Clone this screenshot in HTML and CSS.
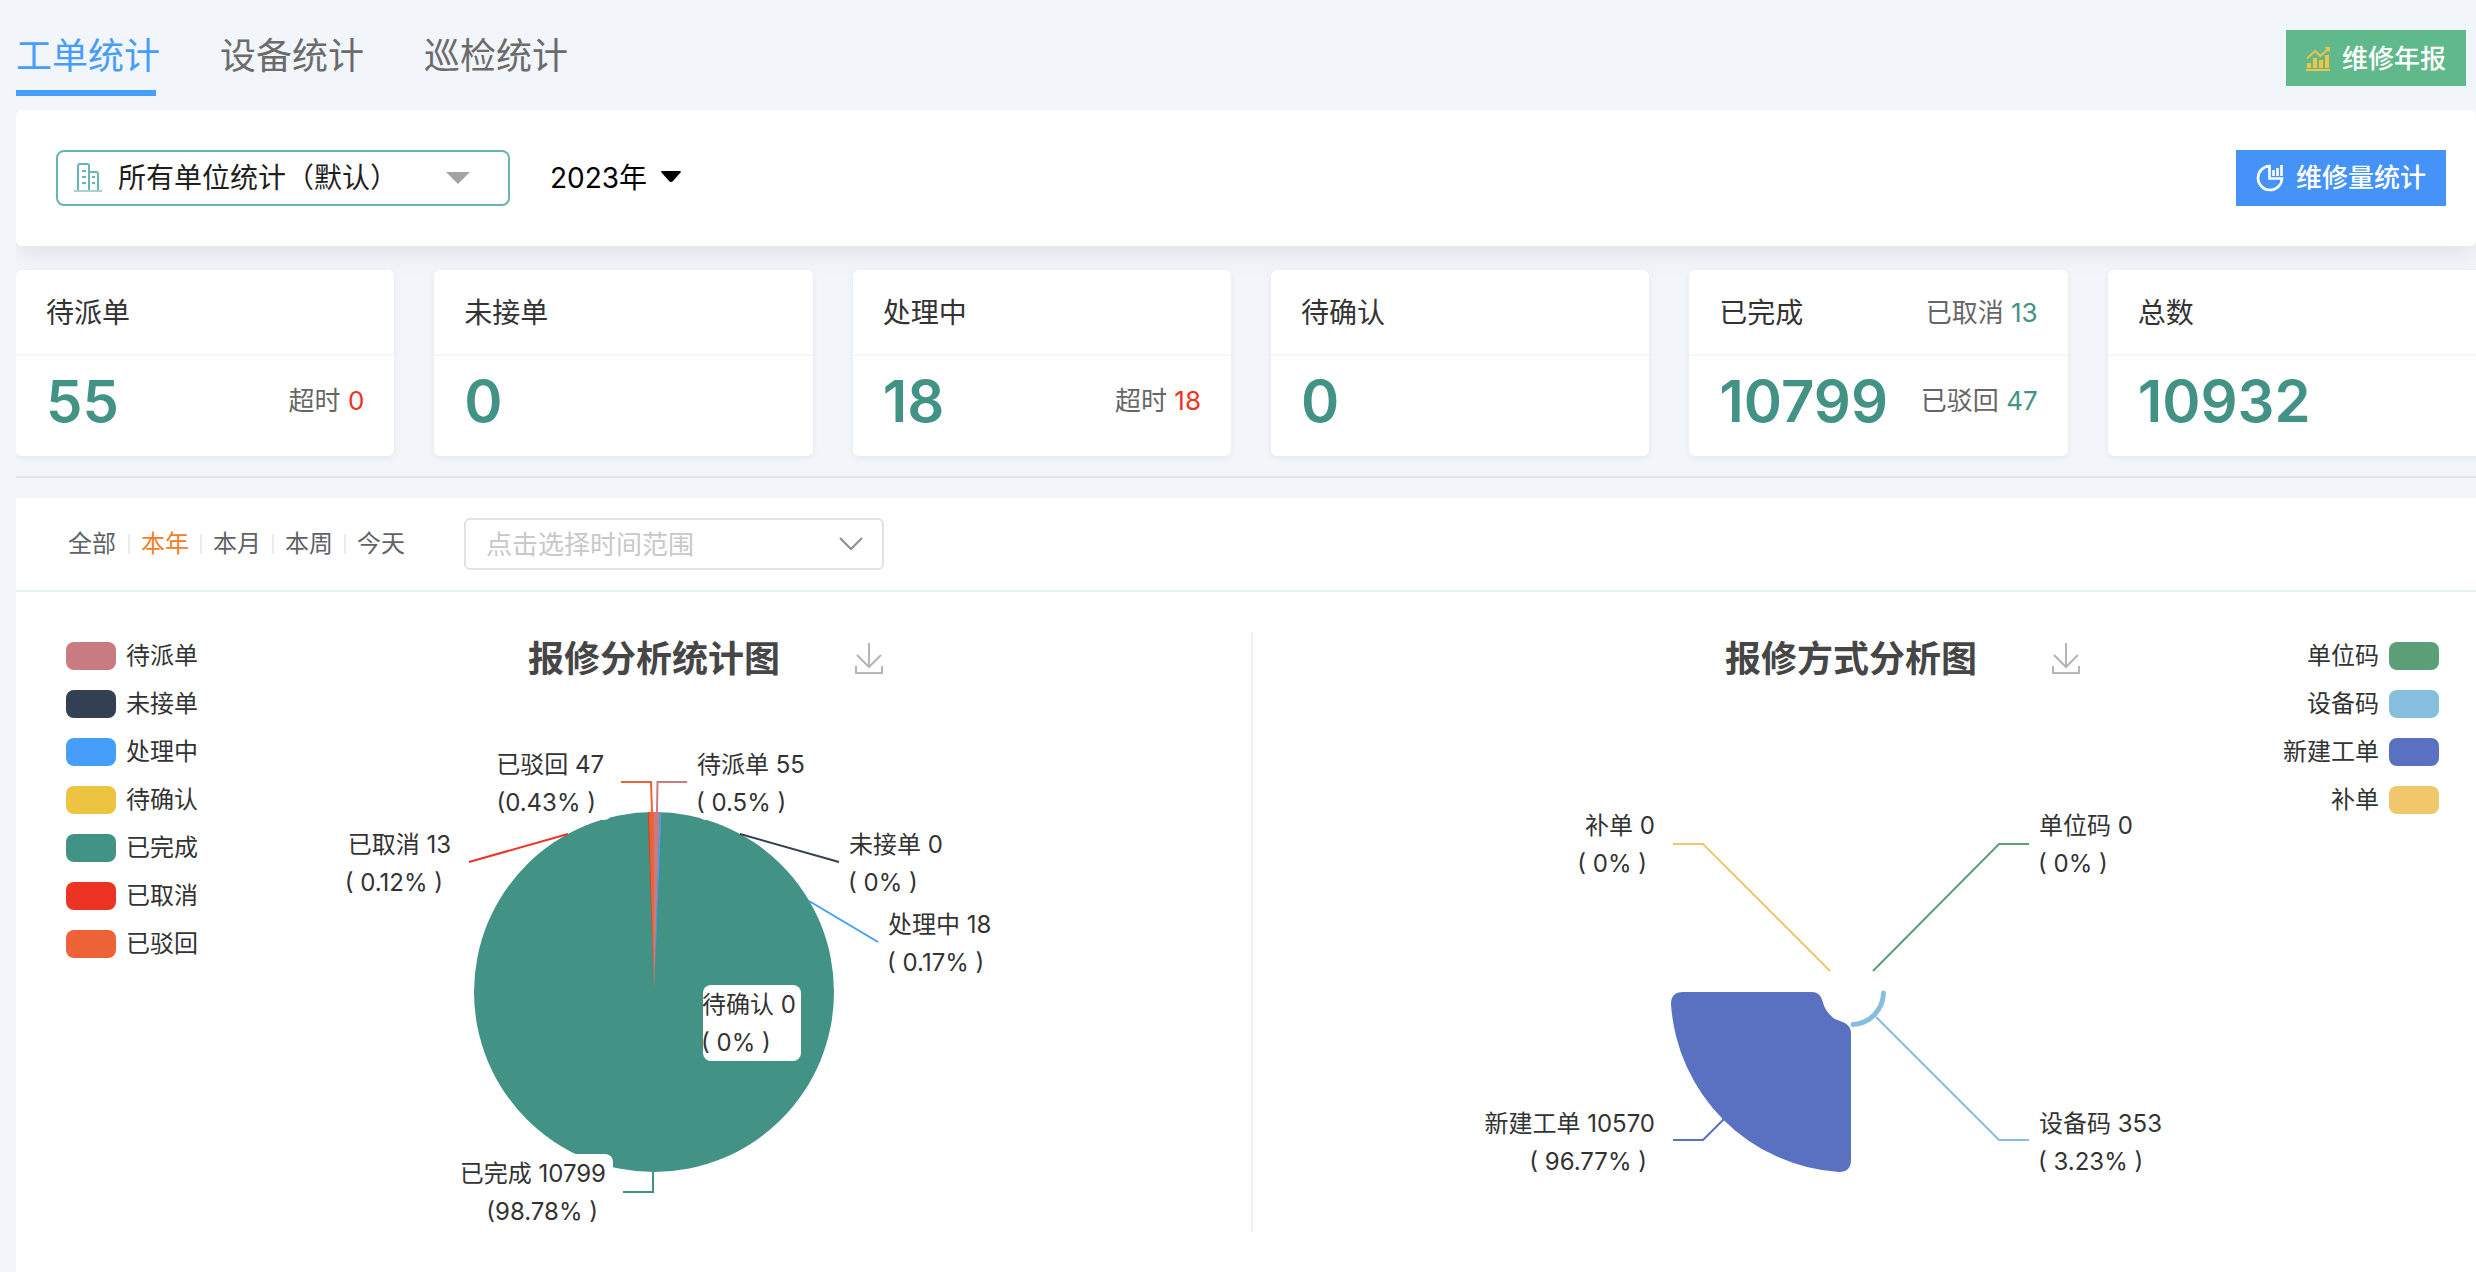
FILE: index.html
```html
<!DOCTYPE html>
<html lang="zh-CN">
<head>
<meta charset="utf-8">
<meta name="viewport" content="width=device-width, initial-scale=1">
<title>工单统计</title>
<link rel="stylesheet" href="styles.css">
</head>
<body>
<header class="topbar">
  <nav class="tabs">
    <a class="tab tab-active" href="#orders">工单统计</a>
    <a class="tab" href="#devices">设备统计</a>
    <a class="tab" href="#patrol">巡检统计</a>
  </nav>
  <button class="btn btn-green" type="button">
    <svg width="24" height="24" viewBox="0 0 24 24" fill="#f6c344" aria-hidden="true">
      <path d="M0 22h24v2H0zM1 16h4v5H1zM7 11h4v10H7zM13 13h4v8h-4zM19 8h4v13h-4z"/>
      <path d="M1 11.500 9 4l5.500 5L22 2" fill="none" stroke="#f6c344" stroke-width="2"/>
      <path d="M18.500 0H24v5.500z"/>
    </svg>
    <span>维修年报</span>
  </button>
</header>

<main class="content">
  <section class="panel scope">
    <div class="unit">
      <svg width="30" height="30" viewBox="0 0 30 30" fill="none" stroke="#67b5b3" stroke-width="2" aria-hidden="true">
        <path d="M5 27V3q0-2 2-2h7q2 0 2 2v24M16 9h7q2 0 2 2v16M9 8h4M9 14h4M9 20h4M19 14h3M19 20h3"/>
        <path d="M1 28h28" stroke-opacity=".6"/>
      </svg>
      <select class="unit-select" aria-label="单位"><option>所有单位统计（默认）</option></select>
      <svg class="unit-arrow" width="24" height="12" viewBox="0 0 24 12" aria-hidden="true"><path d="M0 0h24L12 12z" fill="#a1a3a6"/></svg>
    </div>
    <button class="year" type="button">2023年
      <svg width="20" height="11" viewBox="0 0 20 11" aria-hidden="true"><path d="M1 0h18q1.500 0 .5 1.500L12 10q-2 2-4 0L.5 1.500Q-.5 0 1 0z"/></svg>
    </button>
    <button class="btn btn-blue" type="button">
      <svg width="28" height="28" viewBox="0 0 28 28" fill="none" stroke="#fff" aria-hidden="true">
        <path d="M13.500 2A12 12 0 1 0 26 14.500H13.500z" stroke-width="2.600"/>
        <path d="M17.500 6v6M21.500 4v8M25.500 1v11" stroke-width="2.600"/>
      </svg>
      <span>维修量统计</span>
    </button>
  </section>

  <section class="cards">
    <article class="card">
      <div class="card-head"><h2>待派单</h2></div>
      <div class="card-body"><strong>55</strong><span>超时 <b class="red">0</b></span></div>
    </article>
    <article class="card">
      <div class="card-head"><h2>未接单</h2></div>
      <div class="card-body"><strong>0</strong></div>
    </article>
    <article class="card">
      <div class="card-head"><h2>处理中</h2></div>
      <div class="card-body"><strong>18</strong><span>超时 <b class="red">18</b></span></div>
    </article>
    <article class="card">
      <div class="card-head"><h2>待确认</h2></div>
      <div class="card-body"><strong>0</strong></div>
    </article>
    <article class="card">
      <div class="card-head"><h2>已完成</h2><span>已取消 <b>13</b></span></div>
      <div class="card-body"><strong>10799</strong><span>已驳回 <b>47</b></span></div>
    </article>
    <article class="card">
      <div class="card-head"><h2>总数</h2></div>
      <div class="card-body"><strong>10932</strong></div>
    </article>
  </section>

  <hr class="rule">

  <section class="analysis">
    <div class="filters">
      <div class="ranges">
        <button type="button">全部</button>
        <button type="button" class="on">本年</button>
        <button type="button">本月</button>
        <button type="button">本周</button>
        <button type="button">今天</button>
      </div>
      <div class="period">
        <input type="text" placeholder="点击选择时间范围" aria-label="时间范围">
        <svg width="24" height="14" viewBox="0 0 24 14" fill="none" stroke="#8c8e91" stroke-width="2" aria-hidden="true"><path d="M1 1l11 11L23 1"/></svg>
      </div>
    </div>

    <div class="charts">
      <div class="chart">
        <svg class="plot" width="1196" height="600" viewBox="-598 -360 1196 600" role="img" aria-label="报修分析统计图">
          <circle r="180" fill="#429286"/>
          <path d="M0 0-6.200-179.900-4.900-180z" fill="#ed3323"/>
          <path d="M0 0-4.900-180H0z" fill="#ee6237"/>
          <path d="M0 0V-180L5.700-179.900z" fill="#c97c80"/>
          <path d="M0 0 5.700-179.900 7.500-179.800z" fill="#479dfa"/>
          <g fill="none" stroke-width="2">
            <path d="M-33-210h30l1 30" stroke="#ee6237"/>
            <path d="M33-210H3.500l-.5 30" stroke="#c97c80"/>
            <path d="M-185-130l99-28" stroke="#ed3323"/>
            <path d="M185-130l-99-28" stroke="#314053"/>
            <path d="M224-50l-69-41" stroke="#479dfa"/>
            <path d="M-31 200h30v-20" stroke="#429286"/>
          </g>
          <g fill="#fff">
            <rect x="-160" y="-248" width="118" height="76" rx="8"/>
            <rect x="44" y="-248" width="118" height="76" rx="8"/>
            <rect x="49" y="-7" width="98" height="76" rx="8"/>
            <rect x="-198" y="162" width="157" height="76" rx="8"/>
          </g>
          <g class="label">
            <text x="43" y="-219">待派单 55</text><text x="42" y="-181">( 0.5% )</text>
            <text x="195" y="-139">未接单 0</text><text x="194" y="-101">( 0% )</text>
            <text x="234" y="-59">处理中 18</text><text x="233" y="-21">( 0.17%  )</text>
            <text x="48" y="21">待确认 0</text><text x="47" y="59">( 0% )</text>
          </g>
          <g class="label label-end">
            <text x="-50" y="-219">已驳回 47</text><text x="-58" y="-181">(0.43% )</text>
            <text x="-203" y="-139">已取消 13</text><text x="-211" y="-101">( 0.12% )</text>
            <text x="-48" y="190">已完成 10799</text><text x="-56" y="228">(98.78% )</text>
          </g>
        </svg>
        <div class="chart-head">
          <h3>报修分析统计图</h3>
          <button type="button" aria-label="下载">
            <svg width="28" height="32" viewBox="0 0 28 32" fill="none" stroke="#b5b5b5" stroke-width="2" aria-hidden="true"><path d="M14 0v24M2 12l12 12 12-12M1 23v7h26v-7"/></svg>
          </button>
        </div>
        <ul class="legend">
          <li><i class="c-pending"></i>待派单</li>
          <li><i class="c-open"></i>未接单</li>
          <li><i class="c-doing"></i>处理中</li>
          <li><i class="c-confirm"></i>待确认</li>
          <li><i class="c-done"></i>已完成</li>
          <li><i class="c-cancel"></i>已取消</li>
          <li><i class="c-reject"></i>已驳回</li>
        </ul>
      </div>

      <div class="chart">
        <svg class="plot" width="1196" height="600" viewBox="-598 -360 1196 600" role="img" aria-label="报修方式分析图">
          <path d="M-168 0H-39Q-31 0-28.500 9A30 30 0 0 0-17 26.500C-10 30 0 31 0 41V168Q0 180-12 180A180 180 0 0 1-180 12Q-180 0-168 0z" fill="#5971c0"/>
          <path d="M32.500 1A32.500 32.500 0 0 1 2 32.500" fill="none" stroke="#85bfdd" stroke-width="5" stroke-linecap="round"/>
          <g fill="none" stroke-width="2">
            <path d="M-178-148h30L-21-21" stroke="#f2c76b"/>
            <path d="M178-148h-30L22-21" stroke="#5a9f77"/>
            <path d="M178 148h-30L25 25" stroke="#85bfdd"/>
            <path d="M-178 148h30l21-21" stroke="#5971c0"/>
          </g>
          <g class="label">
            <text x="188" y="-158">单位码 0</text><text x="187" y="-120">( 0% )</text>
            <text x="188" y="140">设备码 353</text><text x="187" y="178">( 3.23% )</text>
          </g>
          <g class="label label-end">
            <text x="-196" y="-158">补单 0</text><text x="-204" y="-120">( 0% )</text>
            <text x="-196" y="140">新建工单 10570</text><text x="-204" y="178">( 96.77% )</text>
          </g>
        </svg>
        <div class="chart-head">
          <h3>报修方式分析图</h3>
          <button type="button" aria-label="下载">
            <svg width="28" height="32" viewBox="0 0 28 32" fill="none" stroke="#b5b5b5" stroke-width="2" aria-hidden="true"><path d="M14 0v24M2 12l12 12 12-12M1 23v7h26v-7"/></svg>
          </button>
        </div>
        <ul class="legend legend-right">
          <li><i class="c-unit"></i>单位码</li>
          <li><i class="c-device"></i>设备码</li>
          <li><i class="c-new"></i>新建工单</li>
          <li><i class="c-extra"></i>补单</li>
        </ul>
      </div>
    </div>
  </section>
</main>
</body>
</html>
```
FILE: styles.css
```css
* { box-sizing: border-box; }

body {
  margin: 0;
  min-height: 100vh;
  display: flex;
  flex-direction: column;
  overflow-x: hidden;
  background: #f2f5fa;
  color: #333;
  font: 24px/36px Inter, "Noto Sans CJK SC", sans-serif;
}

h2, h3, ul { margin: 0; padding: 0; font-weight: 400; list-style: none; }
svg { display: block; flex: none; }
button, input, select { font: inherit; color: inherit; border: 0; padding: 0; background: none; }
button { cursor: pointer; }

/* top tabs */
.topbar {
  height: 110px;
  padding: 30px 10px 14px 16px;
  display: flex;
  justify-content: space-between;
  align-items: flex-start;
}
.tabs { display: flex; gap: 60px; }
.tab { font-size: 36px; line-height: 52px; color: #6b6b6b; text-decoration: none; }
.tab-active { color: #479dfa; }
.tab-active::after { content: ""; display: block; width: 140px; height: 6px; margin-top: 8px; background: #479dfa; }

.btn {
  display: flex;
  align-items: center;
  gap: 12px;
  height: 56px;
  padding: 2px 20px 0;
  color: #fff;
  font-size: 26px;
  font-weight: 500;
}
.btn-green { background: #5fb98a; }
.btn-blue { background: #4592f8; margin-left: auto; padding-top: 0; }

/* main column */
.content {
  flex: 1;
  margin-left: 16px;
  overflow: hidden;
  display: flex;
  flex-direction: column;
}
.scope {
  display: flex;
  align-items: center;
  padding: 40px 30px 40px 40px;
  background: #fff;
  border-radius: 6px;
  box-shadow: 0 8px 24px rgba(0, 0, 0, .08);
}
.unit {
  width: 454px;
  height: 56px;
  padding: 0 38px 0 15px;
  display: flex;
  align-items: center;
  gap: 15px;
  border: 2px solid #67b5b3;
  border-radius: 8px;
  color: #1f1f1f;
}
.unit-select { flex: 1; appearance: none; font-size: 28px; outline: 0; }
.year { margin-left: 40px; display: flex; align-items: center; gap: 14px; font-size: 28px; color: #000; }
.year svg { margin-bottom: 4px; }

/* figures */
.cards {
  display: grid;
  grid-template-columns: repeat(6, 1fr);
  gap: 40px;
  margin: 24px -10px 20px 0;
}
.card { background: #fff; border-radius: 6px; box-shadow: 0 2px 6px rgba(0, 0, 0, .06); }
.card-head, .card-body {
  display: flex;
  justify-content: space-between;
  align-items: center;
  padding: 2px 30px 0;
  font-size: 26px;
  color: #666;
}
.card-head { height: 86px; border-bottom: 2px solid #f5f6f7; }
.card-body { height: 100px; padding-bottom: 12px; }
.card h2 { font-size: 28px; color: #333; }
.card strong { font-size: 58px; font-weight: 600; line-height: 72px; color: #429286; }
.card b { font-weight: 400; color: #429286; }
.card .red { color: #ed3323; }

.rule { width: 100%; height: 2px; margin: 0 0 20px; border: 0; background: #e6e6e6; }

/* analysis */
.analysis { flex: 1; background: #fff; }
.filters {
  height: 94px;
  display: flex;
  align-items: center;
  padding-left: 40px;
  border-bottom: 2px solid #e8f4f1;
}
.ranges { display: flex; align-items: center; color: #606266; }
.ranges button { width: 72px; line-height: 20px; }
.ranges button + button { border-left: 2px solid #ebebeb; }
.ranges .on { color: #f08026; }
.period {
  width: 420px;
  height: 52px;
  margin-left: 48px;
  padding: 0 19px 0 20px;
  display: flex;
  align-items: center;
  border: 2px solid #e2e2e2;
  border-radius: 6px;
}
.period input { flex: 1; min-width: 0; padding-top: 2px; font-size: 26px; outline: 0; }
.period input::placeholder { color: #c8c8c8; opacity: 1; }

.charts { display: grid; grid-template-columns: 1fr 1fr; padding: 40px 30px 40px 40px; }
.chart { display: grid; overflow: hidden; }
.chart > * { grid-area: 1 / 1; }
.chart + .chart { border-left: 2px solid #f0f0f0; }
.plot { justify-self: center; }
.chart-head {
  display: grid;
  grid-template-columns: 1fr auto 1fr;
  align-self: start;
  align-items: center;
  padding-top: 2px;
  line-height: 50px;
}
.chart-head h3 { grid-column: 2; font-size: 36px; font-weight: 700; color: #464646; }
.chart-head button { justify-self: start; margin-left: 75px; }
.legend { justify-self: start; align-self: start; padding: 10px; display: grid; gap: 20px; }
.legend li { display: flex; align-items: center; gap: 10px; height: 28px; }
.legend i { width: 50px; height: 28px; border-radius: 8px; }
.legend-right { justify-self: end; }
.legend-right li { flex-direction: row-reverse; }

.label { font-size: 24px; fill: #333; }
.label-end { text-anchor: end; }

.c-pending { background: #c97c80; }
.c-open { background: #314053; }
.c-doing { background: #479dfa; }
.c-confirm { background: #ecc441; }
.c-done { background: #429286; }
.c-cancel { background: #ed3323; }
.c-reject { background: #ee6237; }
.c-unit { background: #5a9f77; }
.c-device { background: #85bfdd; }
.c-new { background: #5971c0; }
.c-extra { background: #f2c76b; }
```
